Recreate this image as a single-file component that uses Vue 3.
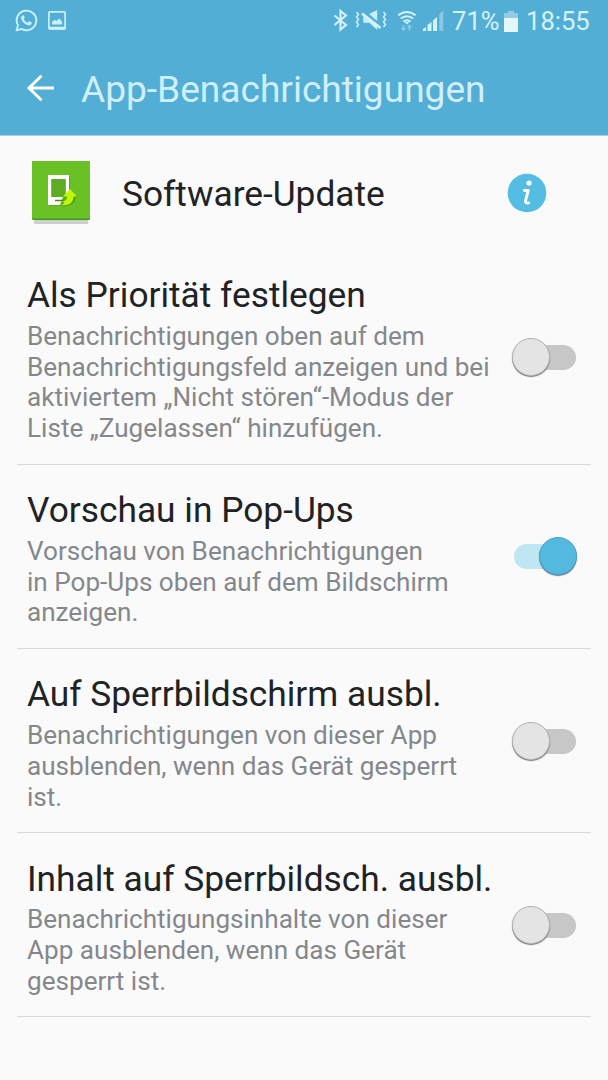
<script setup>
const settings = [
  { title: 'Als Priorität festlegen', lines: ['Benachrichtigungen oben auf dem', 'Benachrichtigungsfeld anzeigen und bei', 'aktiviertem „Nicht stören“-Modus der', 'Liste „Zugelassen“ hinzufügen.'], on: false },
  { title: 'Vorschau in Pop-Ups', lines: ['Vorschau von Benachrichtigungen', 'in Pop-Ups oben auf dem Bildschirm', 'anzeigen.'], on: true },
  { title: 'Auf Sperrbildschirm ausbl.', lines: ['Benachrichtigungen von dieser App', 'ausblenden, wenn das Gerät gesperrt', 'ist.'], on: false },
  { title: 'Inhalt auf Sperrbildsch. ausbl.', lines: ['Benachrichtigungsinhalte von dieser', 'App ausblenden, wenn das Gerät', 'gesperrt ist.'], on: false },
]
</script>

<template>
  <div class="screen">
    <header class="top">
      <div class="status">
        <svg class="notices" width="56" height="26" viewBox="14 8 56 26">
          <path d="M16.500 30.400l1.500-5.100a9.800 9.800 0 1 1 3.600 3.600z" fill="none" stroke="#c9f1fb" stroke-width="1.900" stroke-linejoin="round" />
          <path d="M22.500 15.400c-1.500.9-1.800 2.400-1 4.200 1.300 2.900 3.800 5 6.700 5.700 1.900.4 3.600-.7 3.800-2.500l-2.900-1.700-1.500 1.600c-1.800-.7-3.100-1.900-3.900-3.600l1.200-1.400-1.200-2.500z" fill="#c9f1fb" />
          <rect x="48.900" y="11.900" width="16.200" height="17" rx="1" fill="none" stroke="#c9f1fb" stroke-width="1.700" />
          <path d="M49 26.800h16v2.700H49zM52 24.500v-2.800l3-2 1.500 1.200 2.700-2.400 2.800 3.200v2.800z" fill="#c9f1fb" />
        </svg>
        <svg class="signals" width="114" height="26" viewBox="332 8 114 26">
          <path d="M334.500 15.500l11.500 9.500-5.500 4.500v-18.500l5.500 4.500-11.500 9.500" fill="none" stroke="#d5f3fb" stroke-width="2.100" />
          <path d="M369 14l8.200-4v11zM363.300 14.800v8h6l7.900 7.200v-4z" fill="#c9eefa" />
          <path d="M362 13.500l18.500 14.500" stroke="#d5f3fb" stroke-width="2.600" />
          <path d="M356.500 12l2 2.500-2 2.500 2 2.500-2 2.500 2 2.500-2 2.500M383.500 12l2 2.500-2 2.500 2 2.500-2 2.500 2 2.500-2 2.500" fill="none" stroke="#c9eefa" stroke-width="1.600" />
          <path d="M398.200 15.200q8.700-6.500 17.400 0M400.700 18.500q6.200-4.600 12.400 0M403.400 21.600q3.500-2.700 7 0" fill="none" stroke="#d5f3fb" stroke-width="2" />
          <path d="M404.500 22h4.800l-2.400 2.500z" fill="#d5f3fb" />
          <path d="M403.500 25v5m-2-2l2 2 2-2M409.500 30.500v-5m-2 2l2-2 2 2" fill="none" stroke="#8acbe6" stroke-width="1.500" />
          <path d="M423 31v-2l3-2v4zM427.500 31v-6l4-3v9zM433 31v-10.500l4-3.500v14z" fill="#d5f3fb" />
          <path d="M439.300 31v-16.500l3.900-4.500v21z" fill="#88cae5" />
        </svg>
        <span class="percent">71%</span>
        <svg class="battery" width="14" height="21" viewBox="0 0 14 21">
          <path d="M4 0h6v2h4v5H0V2h4z" fill="#91cce4" /><path d="M0 7h14v14H0z" fill="#e5f7fc" />
        </svg>
        <span class="clock">18:55</span>
      </div>
      <div class="bar">
        <svg width="30" height="30" viewBox="0 0 30 30"><path d="M29 15H4M16.500 2.800L4 15l12.500 12.200" fill="none" stroke="#fff" stroke-width="2.900" /></svg>
        <h1>App-Benachrichtigungen</h1>
      </div>
    </header>

    <section class="app">
      <svg class="logo" width="60" height="64" viewBox="0 0 60 64">
        <path d="M3 59h54v5H3z" fill="#cfcfcf" />
        <rect x="1" y="1" width="58" height="59" rx="1" fill="#3f9b20" />
        <rect x="1" y="1" width="58" height="57.500" rx="1" fill="#6ac126" />
        <path d="M18 16h21v19l-8 11H18z" fill="#4e9a1e" opacity=".5" />
        <path fill-rule="evenodd" d="M17 15h21v17l-6 5-3 8H17zM20.200 19v18h12l2.600-3V19z" fill="#fff" />
        <path d="M24 40.500h9" stroke="#438c1d" stroke-width="1.500" />
        <path d="M30 46c5 1 14 0 15-9h2l-2-2-6 1-6 8z" fill="#4b961b" opacity=".7" />
        <path d="M30 41c5 1 6-2 6.200-4.500H32l7-7.500 7 7.500h-3.500C42 43 38 46 30 45q3-1 3.500-2.500z" fill="#c1f800" />
      </svg>
      <h2>Software-Update</h2>
      <svg class="info" width="40" height="40" viewBox="0 0 40 40">
        <circle cx="20" cy="20" r="19.300" fill="#54bde1" />
        <circle cx="22" cy="10" r="2.600" fill="#fff" />
        <path d="M17.300 17.500h4l-2.700 9.800q-.8 3.400 3 2.600" fill="none" stroke="#fff" stroke-width="2.900" stroke-linecap="round" stroke-linejoin="round" />
      </svg>
    </section>

    <main>
      <section v-for="item in settings" :key="item.title" class="setting">
        <h2>{{ item.title }}</h2>
        <div class="detail">
          <p><span v-for="line in item.lines" :key="line">{{ line }}</span></p>
          <div class="switch" :class="{ on: item.on, tall: item.lines.length === 4 }"><i></i></div>
        </div>
      </section>
    </main>
  </div>
</template>

<style>
html, body { background: #fafafa; }
</style>
<style scoped>
.screen { width: 608px; height: 1080px; overflow: hidden; background: #fafafa; font-family: Roboto, sans-serif; }
.top { height: 136px; background: #53aed5; border-bottom: 1px solid #a9cedf; box-sizing: border-box; }
.status { height: 42px; display: flex; align-items: center; padding-left: 14px; color: #d5f1fa; font-size: 25.600px; }
.signals { margin-left: 262px; }
.percent { width: 47px; margin-left: 6px; white-space: nowrap; }
.battery { margin-left: 5px; }
.clock { margin-left: 8px; white-space: nowrap; }
.bar { height: 92px; display: flex; align-items: center; padding-left: 25px; }
h1, h2, p { margin: 0; font-weight: 400; white-space: nowrap; }
h1 { margin: 3px 0 0 26px; font-size: 37.100px; line-height: 42px; color: #d0effb; }
.app { height: 113.600px; display: flex; align-items: flex-start; padding-left: 31px; box-sizing: border-box; }
.logo { margin-top: 24px; }
h2 { font-size: 35.300px; line-height: 41px; color: #202224; }
.app h2 { width: 385px; margin: 38px 0 0 31px; }
.info { margin-top: 36.500px; }
.setting { position: relative; padding: 25.500px 0 20.650px 27px; }
.setting::after { content: ''; position: absolute; left: 17px; right: 17px; bottom: 0; height: 1px; background: #d9dadb; }
.detail { display: flex; padding-top: 4.700px; margin-bottom: .2px; }
.detail p { width: 485px; font-size: 26.120px; line-height: 30.750px; color: #85888b; }
.detail span { display: block; }
.switch { position: relative; width: 66px; height: 40px; margin-top: 1.500px; }
.switch.tall { margin-top: 17px; }
.switch::before { content: ''; position: absolute; left: 2px; top: 7px; width: 62px; height: 25px; border-radius: 13px; background: #c7c7c7; }
.switch i { position: absolute; left: 0; top: 0; width: 38px; height: 38px; border-radius: 50%; background: #e4e4e4; border: 1px solid #b4b4b4; box-shadow: 0 1px 1px #777; box-sizing: border-box; }
.switch.on::before { background: #bee7f3; }
.switch.on i { left: 27px; background: #54b9df; border-color: #4aa5c8; box-shadow: 0 1px 1px #678; }
</style>
